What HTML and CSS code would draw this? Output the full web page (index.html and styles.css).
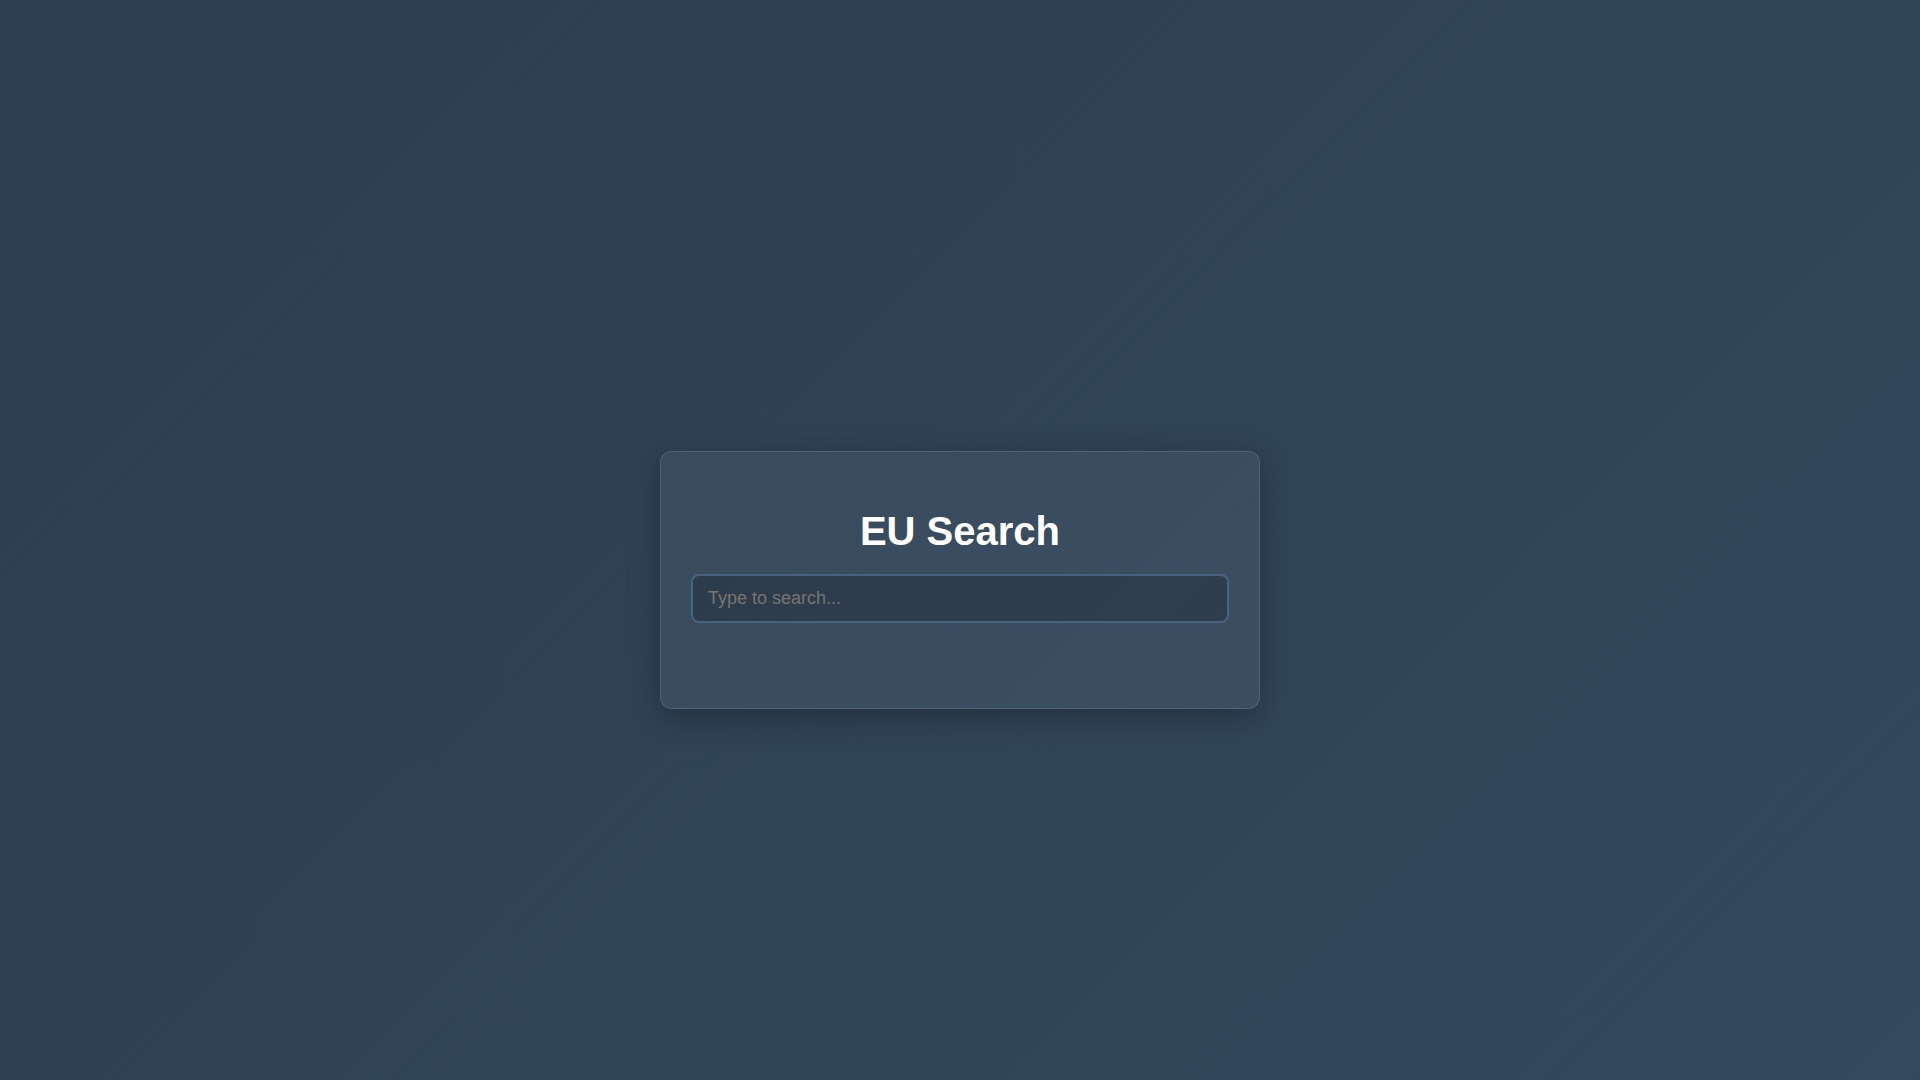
FILE: index.html
```html
<!DOCTYPE html>
<html lang="en">
<head>
<meta charset="utf-8">
<title>EU Search</title>
<link rel="stylesheet" href="styles.css">
</head>
<body>
  <main class="card">
    <h1 class="title">EU Search</h1>
    <input class="search" type="text" placeholder="Type to search...">
    <div class="results"></div>
  </main>
</body>
</html>
```
FILE: styles.css
```css
html {
  background: #2f4155;
}
body {
  margin: 0;
  padding: 40px;
  min-height: 100vh;
  display: flex;
  align-items: center;
  justify-content: center;
  font-family: "Liberation Sans", Arial, sans-serif;
  background: linear-gradient(135deg, #2c3e50 0%, #34495e 100%);
  color: #ffffff;
}
.card {
  box-sizing: border-box;
  width: 600px;
  padding: 30px;
  background: rgba(255, 255, 255, 0.05);
  border: 1px solid rgba(255, 255, 255, 0.12);
  border-radius: 12px;
  box-shadow: 0 8px 32px rgba(0, 0, 0, 0.3);
}
.title {
  margin: 26.8px 0 20px;
  font-size: 40px;
  font-weight: bold;
  text-align: center;
  color: #ffffff;
}
.search {
  display: block;
  box-sizing: border-box;
  width: 100%;
  padding: 12px 15px;
  font-family: "Liberation Sans", Arial, sans-serif;
  font-size: 18px;
  color: #ffffff;
  background: rgba(0, 0, 0, 0.2);
  border: 2px solid #48627f;
  border-radius: 8px;
  outline: none;
}
.search::placeholder {
  color: #757575;
}
.results {
  margin-top: 20px;
  min-height: 35px;
}
```
